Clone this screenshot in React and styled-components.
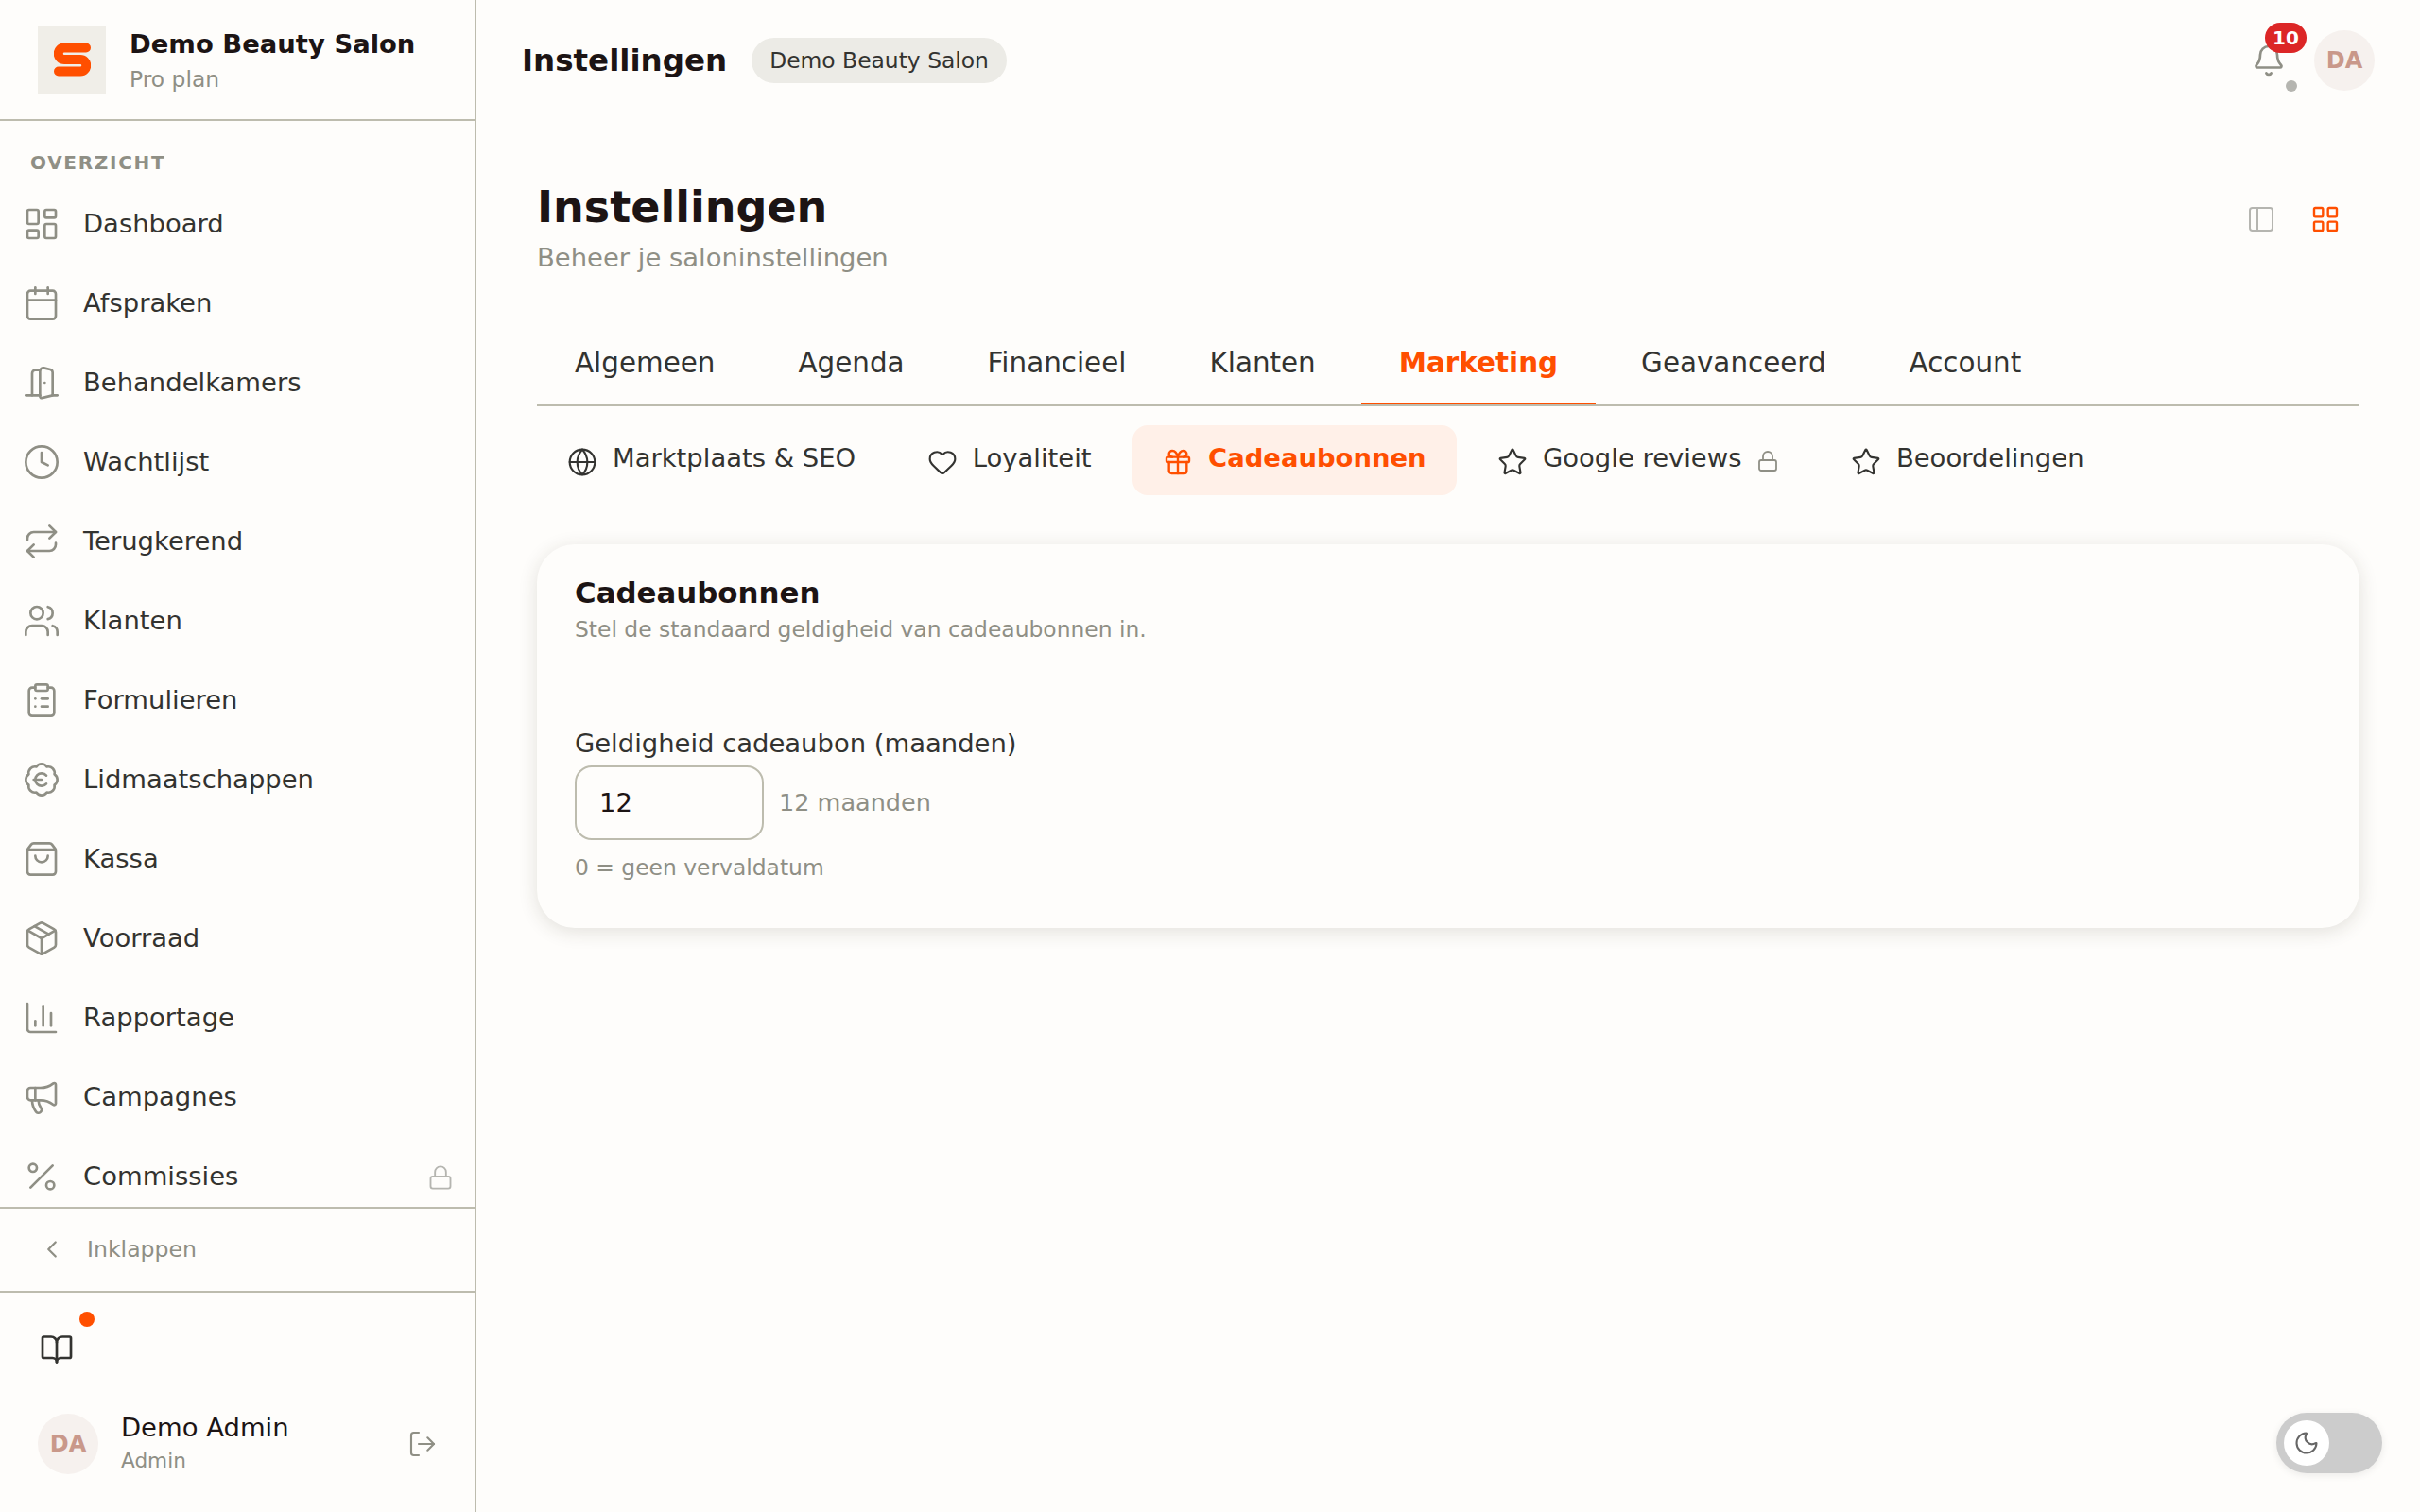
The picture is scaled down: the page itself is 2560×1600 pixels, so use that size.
import React from 'react'
import styled, { createGlobalStyle } from 'styled-components'
import {
  LayoutDashboard, Calendar, DoorOpen, Clock, Repeat, Users, ClipboardList, BadgeEuro,
  ShoppingBag, Package, ChartColumn, Megaphone, Percent, Lock, ChevronLeft, BookOpen,
  LogOut, Bell, PanelLeft, LayoutGrid, Globe, Heart, Gift, Star, Moon,
} from 'lucide-react'

const GlobalStyle = createGlobalStyle`
  html, body { margin: 0; padding: 0; background: #fefdfb; }
  body { font-family: "DejaVu Sans", sans-serif; color: #1c1414; }
  * { box-sizing: border-box; }
`

const navItems = [
  { label: 'Dashboard', icon: LayoutDashboard },
  { label: 'Afspraken', icon: Calendar },
  { label: 'Behandelkamers', icon: DoorOpen },
  { label: 'Wachtlijst', icon: Clock },
  { label: 'Terugkerend', icon: Repeat },
  { label: 'Klanten', icon: Users },
  { label: 'Formulieren', icon: ClipboardList },
  { label: 'Lidmaatschappen', icon: BadgeEuro },
  { label: 'Kassa', icon: ShoppingBag },
  { label: 'Voorraad', icon: Package },
  { label: 'Rapportage', icon: ChartColumn },
  { label: 'Campagnes', icon: Megaphone },
  { label: 'Commissies', icon: Percent, locked: true },
]

const tabs = ['Algemeen', 'Agenda', 'Financieel', 'Klanten', 'Marketing', 'Geavanceerd', 'Account']

const subTabs = [
  { label: 'Marktplaats & SEO', icon: Globe },
  { label: 'Loyaliteit', icon: Heart },
  { label: 'Cadeaubonnen', icon: Gift, active: true },
  { label: 'Google reviews', icon: Star, locked: true },
  { label: 'Beoordelingen', icon: Star },
]

export default function App() {
  return (
    <Shell>
      <GlobalStyle />
      <Sidebar>
        <Brand>
          <LogoTile>
            <svg width="39" height="36" viewBox="0 0 39 36" fill="none">
              <path d="M34 5.5H11a6.25 6.25 0 0 0 0 12.5h17a6.25 6.25 0 0 1 0 12.5H5" stroke="#ff4f00" strokeWidth="10" strokeLinecap="round" strokeLinejoin="round" />
            </svg>
          </LogoTile>
          <BrandText>
            <BrandName>Demo Beauty Salon</BrandName>
            <BrandPlan>Pro plan</BrandPlan>
          </BrandText>
        </Brand>
        <Nav>
          <NavHeading>OVERZICHT</NavHeading>
          {navItems.map(({ label, icon: Icon, locked }) => (
            <NavItem key={label}>
              <NavIcon><Icon size={40} strokeWidth={1.6} /></NavIcon>
              <NavLabel>{label}</NavLabel>
              {locked && <NavLock><Lock size={28} strokeWidth={1.6} /></NavLock>}
            </NavItem>
          ))}
        </Nav>
        <Collapse>
          <ChevronLeft size={30} strokeWidth={1.8} />
          Inklappen
        </Collapse>
        <SideFooter>
          <GuideButton>
            <BookOpen size={36} strokeWidth={1.8} />
            <GuideDot />
          </GuideButton>
          <UserRow>
            <Avatar>DA</Avatar>
            <UserText>
              <UserName>Demo Admin</UserName>
              <UserRole>Admin</UserRole>
            </UserText>
            <LogOut size={32} strokeWidth={1.6} color="#8f8f85" />
          </UserRow>
        </SideFooter>
      </Sidebar>
      <Main>
        <TopBar>
          <TopTitle>Instellingen</TopTitle>
          <SalonPill>Demo Beauty Salon</SalonPill>
          <TopActions>
            <BellWrap>
              <Bell size={36} strokeWidth={1.8} color="#8f8f85" />
              <BellBadge>10</BellBadge>
              <BellDot />
            </BellWrap>
            <Avatar>DA</Avatar>
          </TopActions>
        </TopBar>
        <Content>
          <PageHead>
            <div>
              <PageTitle>Instellingen</PageTitle>
              <PageSub>Beheer je saloninstellingen</PageSub>
            </div>
            <ViewSwitch>
              <ViewButton><PanelLeft size={32} strokeWidth={1.5} color="#b5b5b0" /></ViewButton>
              <ViewButton><LayoutGrid size={32} strokeWidth={1.8} color="#ff4f00" /></ViewButton>
            </ViewSwitch>
          </PageHead>
          <TabBar>
            {tabs.map((t) => <Tab key={t} $active={t === 'Marketing'}>{t}</Tab>)}
          </TabBar>
          <SubTabBar>
            {subTabs.map(({ label, icon: Icon, active, locked }) => (
              <SubTab key={label} $active={active}>
                <SubTabIcon><Icon size={32} strokeWidth={active ? 1.8 : 1.6} /></SubTabIcon>
                {label}
                {locked && <SubLock><Lock size={24} strokeWidth={1.8} /></SubLock>}
              </SubTab>
            ))}
          </SubTabBar>
          <Card>
            <CardTitle>Cadeaubonnen</CardTitle>
            <CardDesc>Stel de standaard geldigheid van cadeaubonnen in.</CardDesc>
            <FieldLabel>Geldigheid cadeaubon (maanden)</FieldLabel>
            <FieldRow>
              <NumberInput type="text" defaultValue="12" />
              <FieldUnit>12 maanden</FieldUnit>
            </FieldRow>
            <FieldHint>0 = geen vervaldatum</FieldHint>
          </Card>
        </Content>
      </Main>
      <ThemeToggle>
        <ToggleKnob><Moon size={28} strokeWidth={1.8} color="#666" /></ToggleKnob>
      </ThemeToggle>
    </Shell>
  )
}

const Shell = styled.div`
  display: grid;
  grid-template-columns: 504px 1fr;
  width: 100%;
  height: 100vh;
  overflow: hidden;
  background: #fefdfb;
`

const Sidebar = styled.aside`
  display: flex;
  flex-direction: column;
  height: 100vh;
  border-right: 2px solid #bdbcae;
`

const Brand = styled.div`
  display: flex;
  align-items: center;
  gap: 25px;
  height: 128px;
  flex-shrink: 0;
  padding: 0 40px;
  border-bottom: 2px solid #bdbcae;
`

const LogoTile = styled.div`
  display: flex;
  align-items: center;
  justify-content: center;
  width: 72px;
  height: 72px;
  background: #f0eee8;
`

const BrandText = styled.div`
  padding-top: 2px;
`

const BrandName = styled.div`
  font-size: 27.43px;
  font-weight: 700;
  line-height: 38px;
  color: #1c1414;
`

const BrandPlan = styled.div`
  margin-top: 1px;
  font-size: 23.4px;
  line-height: 34px;
  color: #8f8f85;
`

const Nav = styled.nav`
  flex: 1;
  min-height: 0;
  overflow: hidden;
  padding-top: 30px;
`

const NavHeading = styled.div`
  padding-left: 32px;
  font-size: 20px;
  font-weight: 700;
  letter-spacing: 1.7px;
  line-height: 28px;
  margin-bottom: 9px;
  color: #8f8f85;
`

const NavItem = styled.div`
  display: flex;
  align-items: center;
  gap: 24px;
  height: 84px;
  padding: 0 22px 0 24px;
  font-size: 27.43px;
  color: #333330;
`

const NavIcon = styled.span`
  display: flex;
  color: #8f8f85;
`

const NavLabel = styled.span`
  padding-bottom: 2px;
`

const NavLock = styled.span`
  display: flex;
  margin-left: auto;
  margin-top: 2px;
  color: #b5b5b0;
`

const Collapse = styled.div`
  display: flex;
  align-items: center;
  gap: 22px;
  height: 91px;
  flex-shrink: 0;
  padding: 0 40px 2px;
  font-size: 23.6px;
  color: #8f8f85;
  border-top: 2px solid #bdbcae;
  border-bottom: 2px solid #bdbcae;
`

const SideFooter = styled.div`
  display: flex;
  flex-direction: column;
  height: 232px;
  flex-shrink: 0;
  padding: 0 36px 0 40px;
`

const GuideButton = styled.div`
  position: relative;
  display: flex;
  align-items: center;
  width: 36px;
  height: 36px;
  margin-top: 42px;
  margin-left: 2px;
  color: #333330;
`

const GuideDot = styled.span`
  position: absolute;
  top: -22px;
  left: 42px;
  width: 16px;
  height: 16px;
  border-radius: 50%;
  background: #ff4f00;
`

const UserRow = styled.div`
  display: flex;
  align-items: center;
  gap: 24px;
  margin-top: 46px;
  padding-right: 3px;
  justify-content: space-between;
`

const Avatar = styled.div`
  display: flex;
  align-items: center;
  justify-content: center;
  width: 64px;
  height: 64px;
  flex-shrink: 0;
  border-radius: 50%;
  background: #f6f1ee;
  color: #c9988a;
  font-size: 24px;
  font-weight: 700;
`

const UserText = styled.div`
  flex: 1;
  padding-bottom: 2px;
`

const UserName = styled.div`
  font-size: 27.43px;
  line-height: 37px;
  color: #1c1414;
`

const UserRole = styled.div`
  margin-top: 1px;
  font-size: 21.6px;
  line-height: 31px;
  color: #8f8f85;
`

const Main = styled.main`
  min-width: 0;
`

const TopBar = styled.header`
  display: flex;
  align-items: center;
  gap: 26px;
  height: 124px;
  padding: 3px 48px 0;
`

const TopTitle = styled.div`
  font-size: 32.5px;
  font-weight: 700;
  color: #1c1414;
`

const SalonPill = styled.div`
  display: flex;
  align-items: center;
  height: 48px;
  padding: 0 19px;
  border-radius: 24px;
  background: #ecebe6;
  font-size: 23.4px;
  color: #333330;
`

const TopActions = styled.div`
  display: flex;
  align-items: center;
  gap: 30px;
  margin-left: auto;
`

const BellWrap = styled.div`
  position: relative;
  display: flex;
  width: 36px;
  height: 36px;
`

const BellBadge = styled.span`
  position: absolute;
  top: -22px;
  left: 14px;
  display: flex;
  align-items: center;
  justify-content: center;
  width: 44px;
  height: 32px;
  border-radius: 16px;
  background: #dc2626;
  color: #fff;
  font-size: 20px;
  font-weight: 700;
`

const BellDot = styled.span`
  position: absolute;
  top: 39px;
  left: 36px;
  width: 12px;
  height: 12px;
  border-radius: 50%;
  background: #b5b5b0;
`

const Content = styled.div`
  padding: 66px 64px 0;
`

const PageHead = styled.div`
  display: flex;
  justify-content: space-between;
  align-items: flex-start;
  margin-bottom: 49px;
`

const PageTitle = styled.h1`
  margin: 0;
  font-size: 46px;
  font-weight: 700;
  line-height: 58px;
  color: #1c1414;
`

const PageSub = styled.p`
  margin: 5px 0 0;
  font-size: 27.43px;
  line-height: 40px;
  color: #8f8f85;
`

const ViewSwitch = styled.div`
  display: flex;
  gap: 4px;
  margin: 10px 4px 0 0;
`

const ViewButton = styled.span`
  display: flex;
  padding: 16px;
`

const TabBar = styled.div`
  display: flex;
  gap: 8px;
  height: 88px;
  border-bottom: 2px solid #bdbcae;
`

const Tab = styled.div`
  display: flex;
  align-items: center;
  height: 86px;
  padding: 0 40px 1px;
  font-size: 29.4px;
  font-weight: ${(p) => (p.$active ? 700 : 400)};
  color: ${(p) => (p.$active ? '#ff4f00' : '#333330')};
  border-bottom: 2px solid ${(p) => (p.$active ? '#ff4f00' : 'transparent')};
`

const SubTabBar = styled.div`
  display: flex;
  gap: 11.5px;
  margin-top: 20px;
`

const SubTab = styled.div`
  display: flex;
  align-items: center;
  gap: 16px;
  height: 74px;
  padding: 0 32px 5px;
  border-radius: 16px;
  font-size: 27.43px;
  font-weight: ${(p) => (p.$active ? 700 : 400)};
  color: ${(p) => (p.$active ? '#ff4f00' : '#333330')};
  background: ${(p) => (p.$active ? '#fff0e8' : 'transparent')};
`

const SubTabIcon = styled.span`
  display: flex;
  margin-top: 8px;
`

const SubLock = styled.span`
  display: flex;
  margin-top: 7px;
  color: #8f8f85;
`

const Card = styled.section`
  height: 406px;
  margin-top: 52px;
  padding: 29px 40px;
  border-radius: 40px;
  background: #fefdfb;
  box-shadow: 0 4px 20px rgba(60, 50, 30, 0.14);
`

const CardTitle = styled.h2`
  margin: 0;
  font-size: 30.86px;
  font-weight: 700;
  line-height: 44px;
  color: #1c1414;
`

const CardDesc = styled.p`
  margin: 1px 0 0;
  font-size: 23.4px;
  line-height: 32px;
  color: #8f8f85;
`

const FieldLabel = styled.div`
  margin-top: 86px;
  font-size: 27.43px;
  line-height: 38px;
  color: #333330;
`

const FieldRow = styled.div`
  display: flex;
  align-items: center;
  gap: 16px;
  margin-top: 4px;
`

const NumberInput = styled.input`
  width: 200px;
  height: 79px;
  padding: 0 24px 1px;
  border: 2px solid #bdbcae;
  border-radius: 18px;
  background: transparent;
  font: 27.43px "DejaVu Sans", sans-serif;
  color: #1c1414;
  outline: none;
`

const FieldUnit = styled.span`
  padding-bottom: 2px;
  font-size: 25.5px;
  color: #8f8f85;
`

const FieldHint = styled.div`
  margin-top: 13px;
  font-size: 23.4px;
  line-height: 32px;
  color: #8f8f85;
`

const ThemeToggle = styled.div`
  position: fixed;
  right: 40px;
  bottom: 41px;
  display: flex;
  align-items: center;
  width: 112px;
  height: 64px;
  padding: 8px;
  border-radius: 32px;
  background: #cccccc;
  box-shadow: 0 2px 8px rgba(0, 0, 0, 0.08);
`

const ToggleKnob = styled.span`
  display: flex;
  align-items: center;
  justify-content: center;
  width: 48px;
  height: 48px;
  border-radius: 50%;
  background: #fff;
`
